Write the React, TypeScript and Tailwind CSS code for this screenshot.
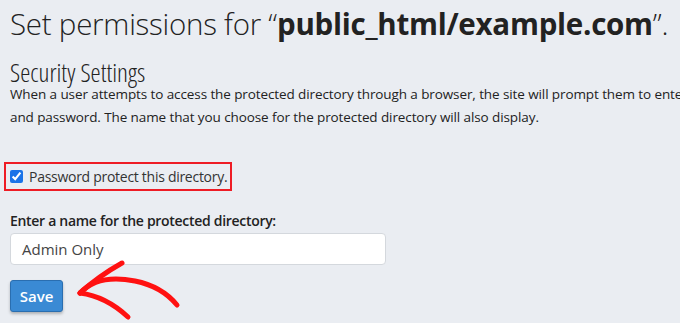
import React from "react";

export default function App() {
  return (
    <div className="w-[680px] h-[323px] overflow-hidden bg-[#eaedf2] text-[#222] relative" style={{ fontFamily: '"Open Sans", "Noto Sans", sans-serif' }}>
      <div className="pl-[10px] pt-[4px]">
        <h1 className="text-[29.5px] leading-[40px] font-light tracking-[-0.25px] whitespace-nowrap">
          Set permissions for “<span className="font-bold">public_html/example.com</span>”.
        </h1>
        <h2 className="mt-[18px] text-[25.5px] leading-[20px] font-light [font-stretch:condensed]">Security Settings</h2>
        <p className="mt-[1px] text-[13.5px] leading-[23px] tracking-[-0.1px] whitespace-nowrap">
          When a user attempts to access the protected directory through a browser, the site will prompt them to enter a username
          <br />
          and password. The name that you choose for the protected directory will also display.
        </p>
      </div>
      <div className="mt-[33px] ml-[4px] w-[228px] h-[29px] border-2 border-[#ee1c25] flex items-center pl-[4px] gap-[6px]">
        <input type="checkbox" defaultChecked className="w-[13px] h-[13px] accent-[#1a73e8] m-0 shrink-0" />
        <span className="text-[14px] text-[#333] whitespace-nowrap tracking-[-0.28px]">Password protect this directory.</span>
      </div>
      <div className="pl-[10px]">
        <div className="mt-[20px] text-[14px] font-semibold text-[#222] leading-[20px] tracking-[-0.3px]">Enter a name for the protected directory:</div>
        <div className="mt-[2px] w-[376px] h-[32px] bg-white border border-[#d4d8dd] rounded-[4px] flex items-center pl-[11px] text-[15px] text-[#444]">
          Admin Only
        </div>
        <button className="mt-[15px] w-[53px] h-[32px] bg-[#3a8ad4] border border-[#2a6eb0] rounded-[3px] text-white font-semibold text-[15px] shadow-[0_2px_3px_rgba(0,0,0,0.25)] flex items-center justify-center">
          Save
        </button>
      </div>
      <svg className="absolute left-0 top-0 pointer-events-none" width="680" height="323" viewBox="0 0 680 323">
        <g fill="none" stroke="#f11" strokeLinecap="round" strokeLinejoin="round">
          <path d="M80 293 C 92 280, 110 276, 135 281 C 155 285, 168 294, 177 305" strokeWidth="5" />
          <path d="M80 293 C 90 284, 106 272, 122 263" strokeWidth="5" />
          <path d="M80 293 C 95 295, 112 302, 128 317" strokeWidth="5" />
        </g>
      </svg>
    </div>
  );
}
